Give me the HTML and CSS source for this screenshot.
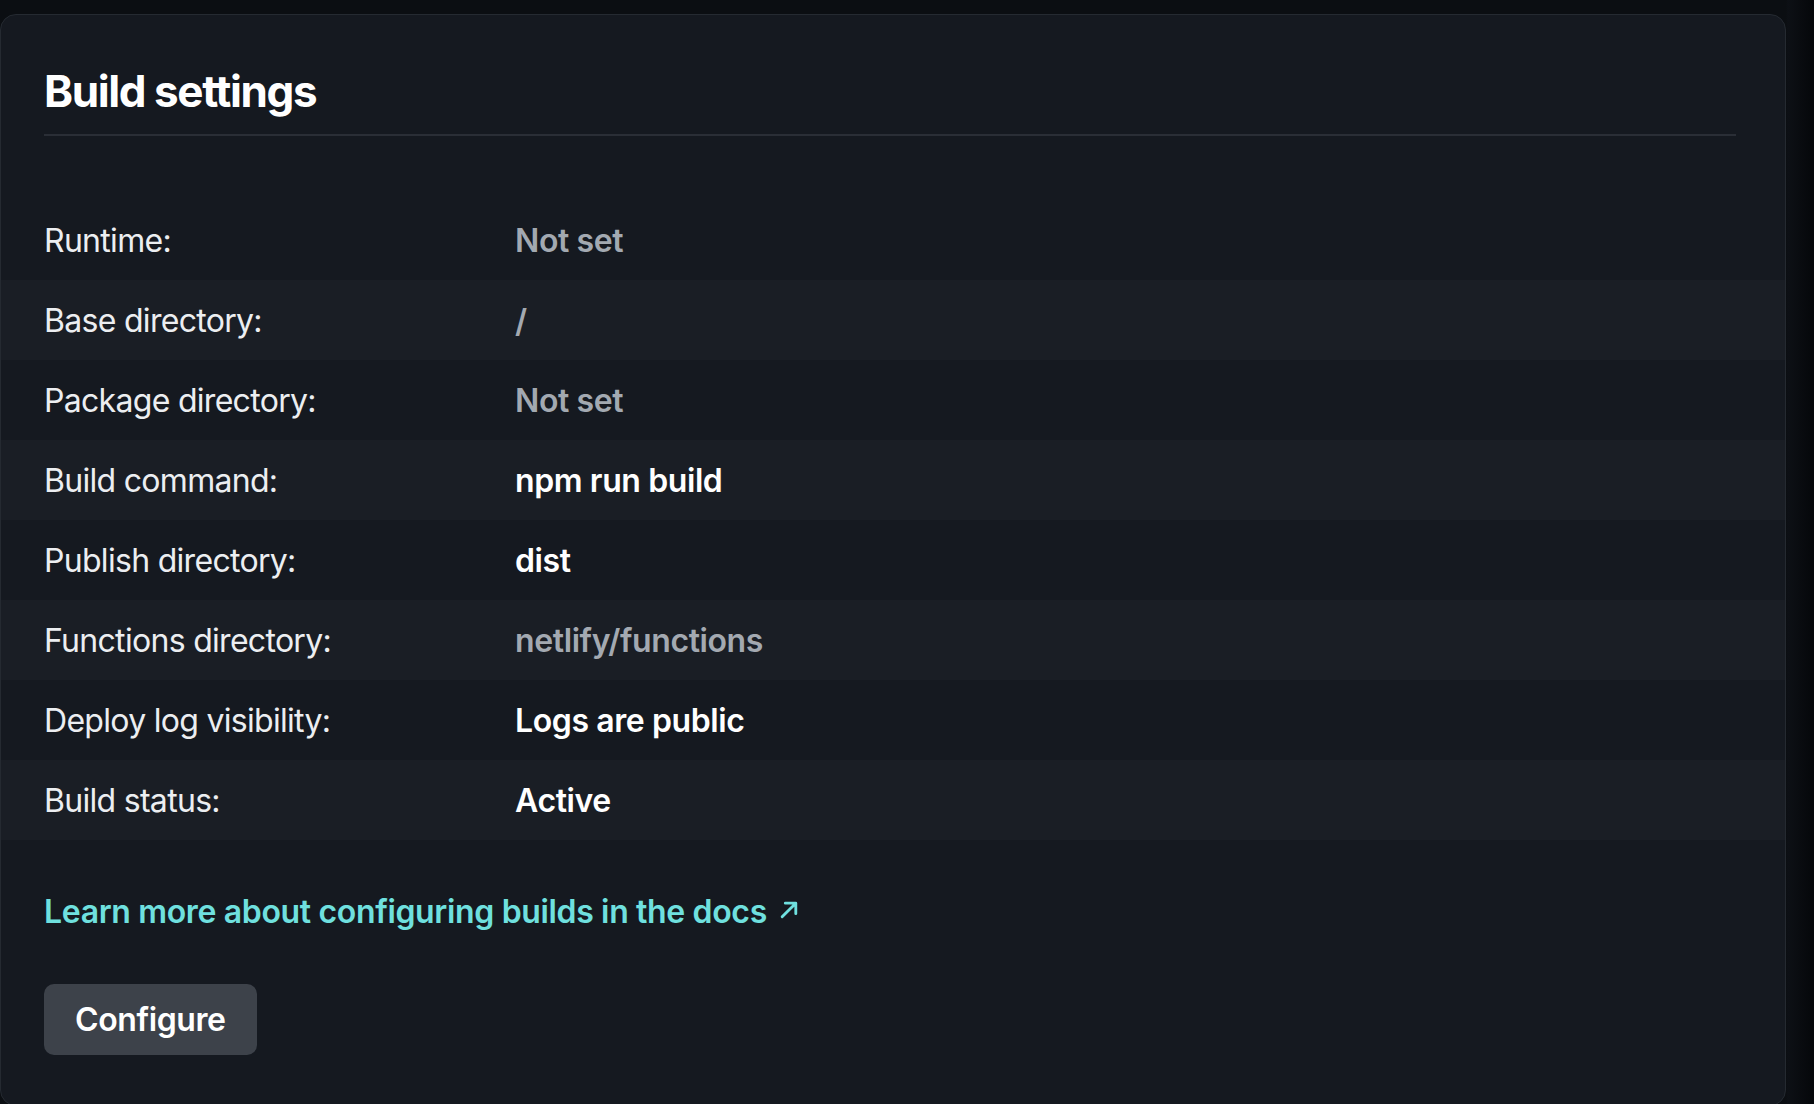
FILE: index.html
```html
<!DOCTYPE html>
<html lang="en">
<head>
<meta charset="utf-8">
<title>Build settings</title>
<link rel="stylesheet" href="styles.css">
</head>
<body>
<section class="card">
  <header class="card-header">
    <h2 class="card-title">Build settings</h2>
  </header>
  <dl class="settings">
    <div class="row"><dt class="label">Runtime:</dt><dd class="value muted">Not set</dd></div>
    <div class="row"><dt class="label">Base directory:</dt><dd class="value muted">/</dd></div>
    <div class="row"><dt class="label">Package directory:</dt><dd class="value muted">Not set</dd></div>
    <div class="row"><dt class="label">Build command:</dt><dd class="value">npm run build</dd></div>
    <div class="row"><dt class="label">Publish directory:</dt><dd class="value">dist</dd></div>
    <div class="row"><dt class="label">Functions directory:</dt><dd class="value muted">netlify/functions</dd></div>
    <div class="row"><dt class="label">Deploy log visibility:</dt><dd class="value">Logs are public</dd></div>
    <div class="row"><dt class="label">Build status:</dt><dd class="value">Active</dd></div>
  </dl>
  <div class="card-footer">
    <a class="doc-link" href="#">Learn more about configuring builds in the docs
      <svg class="ext-icon" viewBox="0 0 20 20" width="20" height="20" aria-hidden="true"><path d="M3 17 L16 4 M6 4 H16 V14" fill="none" stroke="currentColor" stroke-width="2.7" stroke-linecap="round" stroke-linejoin="round"/></svg>
    </a>
    <div class="actions">
      <button class="btn" type="button">Configure</button>
    </div>
  </div>
</section>
</body>
</html>
```

FILE: styles.css
```css
html, body {
  margin: 0;
  padding: 0;
}
body {
  background: linear-gradient(to right, #0b0e12 0, #0b0e12 1786px, #0d1015 1788px, #05070a 1814px);
  font-family: "Inter", "Noto Sans", "Liberation Sans", sans-serif;
  color: #e8eaed;
  height: 1104px;
  overflow: hidden;
}
.card {
  box-sizing: border-box;
  margin-top: 14px;
  width: 1786px;
  height: 1092px;
  background: #151920;
  border: 1px solid #252a31;
  border-radius: 16px;
  overflow: hidden;
}
.card-header {
  margin: 50px 49px 0 43px;
  padding-bottom: 16px;
  border-bottom: 2px solid #2a2e36;
}
.card-title {
  margin: 0;
  font-size: 44px;
  font-weight: 700;
  line-height: 53px;
  color: #ffffff;
  letter-spacing: -1.4px;
}
.settings {
  margin: 64px 0 0;
  padding: 0;
}
.row {
  display: grid;
  grid-template-columns: 471px 1fr;
  align-items: center;
  height: 80px;
  padding-left: 43px;
}
.row:nth-child(even) {
  background: #1a1e25;
}
.label, .value {
  margin: 0;
  font-size: 32px;
  line-height: 39px;
}
.label {
  font-weight: 400;
  color: #eceef1;
  letter-spacing: -0.7px;
}
.value {
  font-weight: 600;
  color: #ffffff;
  letter-spacing: -0.4px;
}
.value.muted {
  color: #a3a9b1;
}
.card-footer {
  padding: 52px 43px 0;
}
.doc-link {
  display: inline-flex;
  align-items: center;
  gap: 12px;
  font-size: 32px;
  line-height: 39px;
  font-weight: 600;
  letter-spacing: -0.35px;
  color: #6fe0df;
  text-decoration: none;
}
.ext-icon {
  width: 21px;
  height: 21px;
  margin-top: -4px;
}
.actions {
  margin-top: 53px;
}
.btn {
  font-family: inherit;
  font-size: 32px;
  line-height: 39px;
  font-weight: 600;
  letter-spacing: -0.4px;
  color: #ffffff;
  background: #3d424a;
  border: none;
  border-radius: 10px;
  padding: 16px 31px;
  cursor: pointer;
}
```
